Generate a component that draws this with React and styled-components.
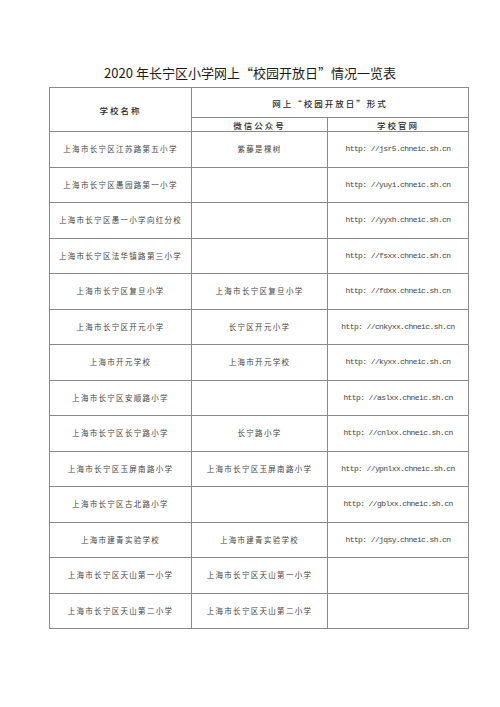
import React from "react";
import styled, { createGlobalStyle } from "styled-components";

const rows = [
  ["上海市长宁区江苏路第五小学", "紫藤是棵树", "http: //jsr5.chneic.sh.cn"],
  ["上海市长宁区愚园路第一小学", "", "http: //yuyi.chneic.sh.cn"],
  ["上海市长宁区愚一小学向红分校", "", "http: //yyxh.chneic.sh.cn"],
  ["上海市长宁区法华镇路第三小学", "", "http: //fsxx.chneic.sh.cn"],
  ["上海市长宁区复旦小学", "上海市长宁区复旦小学", "http: //fdxx.chneic.sh.cn"],
  ["上海市长宁区开元小学", "长宁区开元小学", "http: //cnkyxx.chneic.sh.cn"],
  ["上海市开元学校", "上海市开元学校", "http: //kyxx.chneic.sh.cn"],
  ["上海市长宁区安顺路小学", "", "http: //aslxx.chneic.sh.cn"],
  ["上海市长宁区长宁路小学", "长宁路小学", "http: //cnlxx.chneic.sh.cn"],
  ["上海市长宁区玉屏南路小学", "上海市长宁区玉屏南路小学", "http: //ypnlxx.chneic.sh.cn"],
  ["上海市长宁区古北路小学", "", "http: //gblxx.chneic.sh.cn"],
  ["上海市建青实验学校", "上海市建青实验学校", "http: //jqsy.chneic.sh.cn"],
  ["上海市长宁区天山第一小学", "上海市长宁区天山第一小学", ""],
  ["上海市长宁区天山第二小学", "上海市长宁区天山第二小学", ""],
];

export default function App() {
  return (
    <Page>
      <GlobalStyle />
      <Title>2020 年长宁区小学网上“校园开放日”情况一览表</Title>
      <Table>
        <colgroup>
          <col style={{ width: 142 }} />
          <col style={{ width: 136 }} />
          <col style={{ width: 141 }} />
        </colgroup>
        <thead>
          <HeadRowTop>
            <HeadCell rowSpan={2}>学校名称</HeadCell>
            <HeadCell colSpan={2}>网上“校园开放日”形式</HeadCell>
          </HeadRowTop>
          <HeadRowBottom>
            <HeadCell>微信公众号</HeadCell>
            <HeadCell>学校官网</HeadCell>
          </HeadRowBottom>
        </thead>
        <tbody>
          {rows.map((r) => (
            <BodyRow key={r[0]}>
              <Cell>{r[0]}</Cell>
              <Cell>{r[1]}</Cell>
              <UrlCell>{r[2]}</UrlCell>
            </BodyRow>
          ))}
        </tbody>
      </Table>
    </Page>
  );
}

//-----------页面-------------
const GlobalStyle = createGlobalStyle`
  body {
    margin: 0;
    background: #ffffff;
  }
`;

const Page = styled.div`
  width: 500px;
  height: 707px;
  padding-top: 63px;
  box-sizing: border-box;
  background: #fff;
`;

//标题
const Title = styled.div`
  text-align: center;
  font-family: "Noto Sans CJK SC", sans-serif;
  font-size: 13px;
  line-height: 20px;
  color: #1a1a1a;
  margin-bottom: 4px;
`;

//表格
const Table = styled.table`
  margin-left: 49px;
  width: 419px;
  table-layout: fixed;
  border-collapse: collapse;
  font-family: "Noto Sans CJK SC", sans-serif;
`;

const HeadRowTop = styled.tr`
  height: 30px;
`;

const HeadRowBottom = styled.tr`
  height: 14px;
`;

const HeadCell = styled.th`
  border: 1px solid #8a8a8a;
  padding: 0;
  font-size: 8.5px;
  font-weight: 500;
  letter-spacing: 2px;
  line-height: 12px;
  color: #2a2a2a;
  text-align: center;
  vertical-align: middle;
`;

const BodyRow = styled.tr`
  height: 35.5px;
`;

const Cell = styled.td`
  border: 1px solid #8a8a8a;
  padding: 0;
  font-size: 7.5px;
  letter-spacing: 1.3px;
  line-height: 10px;
  color: #444;
  text-align: center;
  vertical-align: middle;
  white-space: nowrap;
`;

//网址：等宽字体
const UrlCell = styled(Cell)`
  font-family: "Liberation Mono", monospace;
  font-size: 8px;
  letter-spacing: -0.6px;
`;
